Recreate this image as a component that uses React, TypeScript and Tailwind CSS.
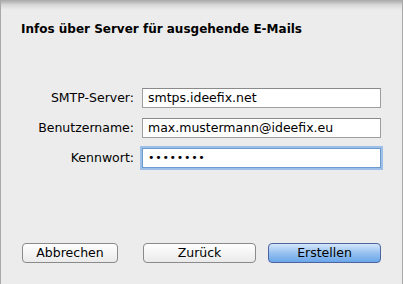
const fields = [
  { label: 'SMTP-Server:', value: 'smtps.ideefix.net', focused: false },
  { label: 'Benutzername:', value: 'max.mustermann@ideefix.eu', focused: false },
  { label: 'Kennwort:', value: '••••••••', focused: true },
];

export default function App() {
  return (
    <div
      className="relative w-[403px] h-[284px] bg-[#ececec] border-l border-r border-[#a9a9a9] text-[12.5px] text-black overflow-hidden"
      style={{ fontFamily: '"DejaVu Sans", "Liberation Sans", sans-serif' }}
    >
      {/* top shadow of the parent window */}
      <div className="absolute inset-x-0 top-0 h-[10px] bg-gradient-to-b from-[#a8a8a8] via-[#d8d8d8] to-[#ececec]" />

      <div className="relative flex flex-col h-full">
        <h1 className="pl-[20px] pt-[21px] font-bold text-[12px] leading-[16px]">
          Infos über Server für ausgehende E-Mails
        </h1>

        <div className="flex flex-col gap-[10px] mt-[51px]">
          {fields.map((f) => (
            <div key={f.label} className="flex items-center">
              <span className="w-[134px] text-right pr-[1px]">{f.label}</span>
              <div
                className={`ml-[7px] w-[239px] h-[20px] bg-white flex items-center pl-[5px] ${
                  f.focused
                    ? 'border border-[#6d9bd0] shadow-[0_0_0_2px_#9cc0e8]'
                    : 'border border-[#9e9e9e] border-t-[#8a8a8a]'
                }`}
              >
                <span className={f.focused ? 'text-[11px] tracking-[0.7px]' : ''}>{f.value}</span>
              </div>
            </div>
          ))}
        </div>

        <div className="flex mt-auto mb-[21px] pl-[21px]">
          <button className="w-[96px] h-[20px] rounded-[4px] border border-[#8a8a8a] bg-gradient-to-b from-white to-[#eaeaea] leading-none">
            Abbrechen
          </button>
          <button className="ml-[25px] w-[113px] h-[20px] rounded-[4px] border border-[#8a8a8a] bg-gradient-to-b from-white to-[#eaeaea] leading-none">
            Zurück
          </button>
          <button className="ml-[12px] w-[113px] h-[20px] rounded-[4px] border border-[#4e64a0] bg-gradient-to-b from-[#d4e6fb] via-[#96c1f0] to-[#6aa6ea] leading-none">
            Erstellen
          </button>
        </div>
      </div>
    </div>
  );
}
